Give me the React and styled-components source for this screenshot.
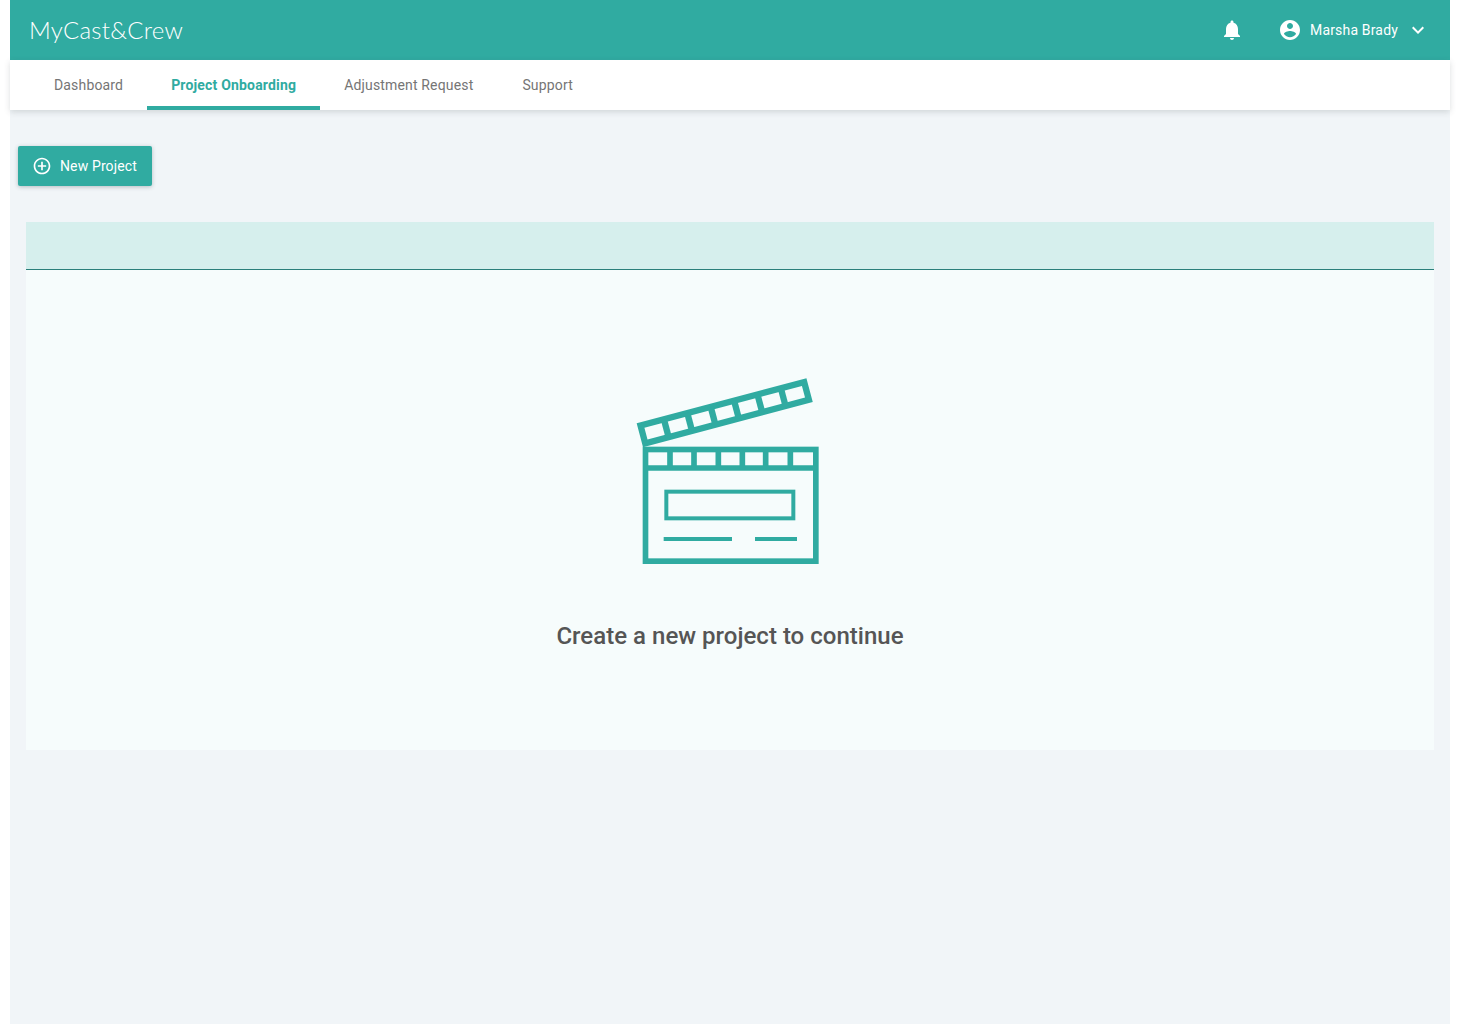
import React from "react";
import styled, { createGlobalStyle } from "styled-components";

const teal = "#30aba1";

const Global = createGlobalStyle`
  html, body { margin: 0; padding: 0; background: #fff; }
  body { font-family: Roboto, "Liberation Sans", sans-serif; }
  * { box-sizing: border-box; }
`;

const Page = styled.div`
  margin: 0 10px;
  height: 1024px;
  background: #f1f5f8;
`;

const TopBar = styled.header`
  height: 60px;
  background: ${teal};
  display: flex;
  align-items: center;
  padding: 0 20px;
  color: #fff;
`;

const Logo = styled.div`
  font-family: Lato, sans-serif;
  font-weight: 300;
  font-size: 24px;
  letter-spacing: 0.27px;
  margin: -2px 0 0 -1px;
  flex: 1;
`;

const BellSlot = styled.div`
  display: flex;
  margin-right: 34px;
`;

const UserName = styled.span`
  font-size: 14px;
  letter-spacing: 0.17px;
  margin: 0 8px 0 8px;
`;

const Icon = styled.svg`
  width: ${p => p.$size || 24}px;
  height: ${p => p.$size || 24}px;
  fill: currentColor;
  flex: none;
  display: block;
`;

const NavBar = styled.nav`
  height: 50px;
  background: #fff;
  display: flex;
  padding-left: 20px;
  position: relative;
  box-shadow: 0 2px 6px rgba(60, 70, 80, 0.18);
`;

const NavItem = styled.a`
  display: flex;
  align-items: center;
  padding: 4px 24px 0;
  font-size: 14px;
  letter-spacing: ${p => (p.$active ? 0.18 : 0.16)}px;
  font-weight: ${p => (p.$active ? 700 : 400)};
  color: ${p => (p.$active ? teal : "#757575")};
  border-bottom: 4px solid ${p => (p.$active ? teal : "transparent")};

  &:last-child {
    margin-left: 1px;
  }
`;

const Content = styled.main`
  padding: 36px 16px 0 8px;
`;

const NewButton = styled.button`
  height: 40px;
  width: 134px;
  border: 0;
  border-radius: 2px;
  background: ${teal};
  color: #fff;
  display: flex;
  align-items: center;
  gap: 8px;
  padding: 0 0 0 14px;
  font-family: inherit;
  font-size: 14px;
  letter-spacing: 0.13px;
  box-shadow: 0 1px 4px rgba(40, 60, 70, 0.3);
`;

const Panel = styled.section`
  margin: 36px 0 0 8px;
`;

const PanelHead = styled.div`
  height: 48px;
  background: #d6efed;
  border-bottom: 1px solid #2b7f7b;
`;

const PanelBody = styled.div`
  height: 480px;
  background: #f6fcfc;
  display: flex;
  flex-direction: column;
  align-items: center;
  padding-top: 100px;
`;

const Message = styled.p`
  margin: 50px 0 0;
  font-size: 24px;
  line-height: 32px;
  font-weight: 500;
  letter-spacing: 0.02px;
  color: #555;
`;

const ClapperSvg = styled.svg`
  display: block;
  width: 220px;
  height: 200px;
`;

const Clapper = () => (
  <ClapperSvg viewBox="0 0 660 600" fill="none">
    <g transform="translate(50 160) rotate(-14.9)" stroke={teal} strokeWidth="19">
      <rect x="9.5" y="9.5" width="508" height="55" />
      {[1, 2, 3, 4, 5, 6].map(i => (
        <line key={i} x1={9.5 + i * 72.6} y1="9.5" x2={9.5 + i * 72.6} y2="64.5" />
      ))}
    </g>
    <g stroke={teal}>
      <rect x="76.5" y="238.5" width="511" height="335" strokeWidth="17" />
      <line x1="76" y1="294" x2="588" y2="294" strokeWidth="17" />
      {[150, 222, 295, 367, 437, 511].map(x => (
        <line key={x} x1={x} y1="238" x2={x} y2="294" strokeWidth="17" />
      ))}
      <rect x="139" y="365" width="381" height="80" strokeWidth="12" />
      <line x1="131" y1="507" x2="336" y2="507" strokeWidth="12" />
      <line x1="405" y1="507" x2="531" y2="507" strokeWidth="12" />
    </g>
  </ClapperSvg>
);

export default function App() {
  return (
    <>
      <Global />
      <Page>
        <TopBar>
          <Logo>MyCast&amp;Crew</Logo>
          <BellSlot>
            <Icon viewBox="0 0 24 24">
              <path d="M12 22c1.1 0 2-.9 2-2h-4c0 1.1.89 2 2 2zm6-6v-5c0-3.07-1.64-5.64-4.5-6.32V4c0-.83-.67-1.5-1.5-1.5s-1.5.67-1.5 1.5v.68C7.63 5.36 6 7.92 6 11v5l-2 2v1h16v-1l-2-2z" />
            </Icon>
          </BellSlot>
          <Icon viewBox="0 0 24 24">
            <path d="M12 2C6.48 2 2 6.48 2 12s4.48 10 10 10 10-4.48 10-10S17.52 2 12 2zm0 3c1.66 0 3 1.34 3 3s-1.34 3-3 3-3-1.34-3-3 1.34-3 3-3zm0 14.2c-2.5 0-4.71-1.28-6-3.22.03-1.99 4-3.08 6-3.08 1.99 0 5.97 1.09 6 3.08-1.29 1.94-3.5 3.22-6 3.22z" />
          </Icon>
          <UserName>Marsha Brady</UserName>
          <Icon viewBox="0 0 24 24">
            <path d="M16.59 8.59L12 13.17 7.41 8.59 6 10l6 6 6-6z" />
          </Icon>
        </TopBar>
        <NavBar>
          <NavItem>Dashboard</NavItem>
          <NavItem $active>Project Onboarding</NavItem>
          <NavItem>Adjustment Request</NavItem>
          <NavItem>Support</NavItem>
        </NavBar>
        <Content>
          <NewButton>
            <Icon $size={20} viewBox="0 0 24 24">
              <path d="M13 7h-2v4H7v2h4v4h2v-4h4v-2h-4V7zm-1-5C6.49 2 2 6.49 2 12s4.49 10 10 10 10-4.49 10-10S17.51 2 12 2zm0 18c-4.41 0-8-3.59-8-8s3.59-8 8-8 8 3.59 8 8-3.59 8-8 8z" />
            </Icon>
            New Project
          </NewButton>
          <Panel>
            <PanelHead />
            <PanelBody>
              <Clapper />
              <Message>Create a new project to continue</Message>
            </PanelBody>
          </Panel>
        </Content>
      </Page>
    </>
  );
}
